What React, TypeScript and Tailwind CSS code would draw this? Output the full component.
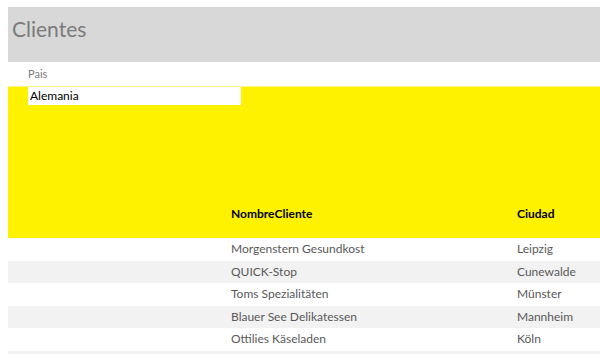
const CLIENTES = [
  { nombre: "Morgenstern Gesundkost", ciudad: "Leipzig" },
  { nombre: "QUICK-Stop", ciudad: "Cunewalde" },
  { nombre: "Toms Spezialitäten", ciudad: "Münster" },
  { nombre: "Blauer See Delikatessen", ciudad: "Mannheim" },
  { nombre: "Ottilies Käseladen", ciudad: "Köln" },
  { nombre: "", ciudad: "" },
];

export default function App() {
  return (
    <div className="h-[354px] overflow-hidden bg-white pt-[7px] pl-2 font-['Lato','Noto_Sans',sans-serif]">
      {/* Title bar */}
      <div className="h-[55px] bg-[#d8d8d8] pl-1 pt-[8px]">
        <h1 className="text-[21px] leading-[27px] text-[#7b7b7b]">Clientes</h1>
      </div>

      {/* Filter label */}
      <div className="flex h-6 items-center pl-5 text-[11px] text-[#7b7b7b]">Pais</div>

      {/* Filter + header */}
      <div className="flex h-[152px] flex-col border-t border-[#fff587] bg-[#fff200]">
        <input
          readOnly
          value="Alemania"
          className="ml-5 h-[18px] w-[213px] bg-white px-[2px] text-[12px] text-black outline-none"
        />
        <div className="flex-1" />
        <div className="grid h-[40px] grid-cols-[223px_286px_1fr] items-center pb-[8px] text-[12px] font-bold text-black">
          <div />
          <div>NombreCliente</div>
          <div>Ciudad</div>
        </div>
      </div>

      {/* Rows */}
      {CLIENTES.map((c, i) => (
        <div
          key={i}
          className={`grid h-[22.5px] grid-cols-[223px_286px_1fr] items-center text-[12px] text-[#595959] ${
            i % 2 === 1 ? "bg-[#f2f2f2]" : "bg-white"
          }`}
        >
          <div />
          <div>{c.nombre}</div>
          <div>{c.ciudad}</div>
        </div>
      ))}
    </div>
  );
}
